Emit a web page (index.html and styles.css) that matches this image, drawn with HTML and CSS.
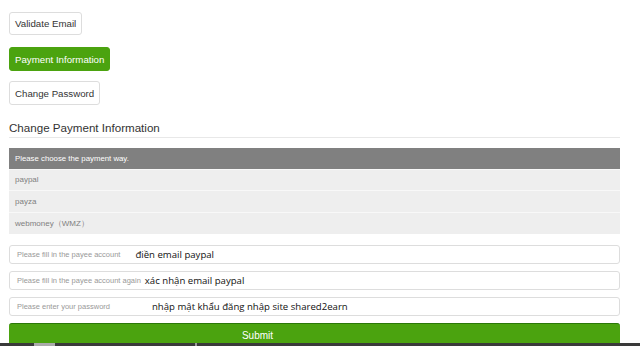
FILE: index.html
```html
<!DOCTYPE html>
<html>
	<head>
		<meta charset="utf-8">
		<title>Payment Information</title>
		<link rel="stylesheet" href="styles.css">
	</head>
	<body>
		<div class="menu">
			<a class="btn">Validate Email</a>
			<a class="btn active">Payment Information</a>
			<a class="btn">Change Password</a>
		</div>
		<h2 class="title">Change Payment Information</h2>
		<div class="ways">
			<div class="ways-head">Please choose the payment way.</div>
			<div class="way">paypal</div>
			<div class="way">payza</div>
			<div class="way">webmoney（WMZ）</div>
		</div>
		<div class="form">
			<div class="field">
				<span class="ph">Please fill in the payee account</span>
				<span class="note note1">điền email paypal</span>
			</div>
			<div class="field">
				<span class="ph">Please fill in the payee account again</span>
				<span class="note note2">xác nhận email paypal</span>
			</div>
			<div class="field">
				<span class="ph">Please enter your password</span>
				<span class="note note3">nhập mật khẩu đăng nhập site shared2earn</span>
			</div>
			<div class="submit">Submit</div>
		</div>
		<div class="taskbar"><span class="tb-item"></span><span class="tb-mark"></span></div>
	</body>
</html>
```
FILE: styles.css
```css
*{
	margin: 0px;
	padding: 0px;
	box-sizing: border-box;
}
html,body{
	height: 346px;
	overflow: hidden;
}
body{
	background: #fff;
	font-family: "Liberation Sans", Arial, sans-serif;
	color: #333;
	padding: 12px 20px 0 9px;
}
.menu{
	display: flex;
	flex-direction: column;
	align-items: flex-start;
	gap: 10px;
}
.btn{
	display: flex;
	align-items: center;
	height: 24px;
	padding: 0 5px;
	font-size: 9.7px;
	color: #333;
	border: 1px solid #ddd;
	border-radius: 3px;
	background: #fff;
}
.btn:first-child{
	height: 23px;
	margin-bottom: 2px;
}
.btn.active{
	background: #4ba30f;
	border-color: #4ba30f;
	color: #fff;
}
.title{
	margin-top: 15px;
	font-weight: normal;
	font-size: 11.6px;
	line-height: 15px;
	color: #333;
	padding-bottom: 2px;
	border-bottom: 1px solid #e8e8e8;
}
.ways{
	margin-top: 10px;
}
.ways-head{
	height: 21px;
	line-height: 21px;
	padding-left: 6px;
	background: #808080;
	color: #fff;
	font-size: 7.8px;
}
.way{
	height: 22px;
	line-height: 21px;
	padding-left: 6px;
	background: #eee;
	border-top: 1px solid #f8f8f8;
	color: #808080;
	font-size: 8px;
}
.way:nth-child(2){
	height: 21px;
	line-height: 20px;
}
.form{
	margin-top: 11px;
	display: flex;
	flex-direction: column;
	gap: 7px;
}
.field{
	display: flex;
	align-items: center;
	height: 19px;
	padding-left: 7px;
	border: 1px solid #ddd;
	border-radius: 3px;
}
.ph{
	font-size: 7.5px;
	color: #999;
}
.note{
	font-family: "Open Sans", "Noto Sans", sans-serif;
	font-size: 9.6px;
	color: #111;
}
.note1{
	margin-left: 15px;
}
.note2{
	margin-left: 4px;
}
.note3{
	margin-left: 42px;
}
.submit{
	height: 26px;
	padding-right: 114px;
	padding-bottom: 2px;
	display: flex;
	align-items: center;
	justify-content: center;
	background: #4ba30f;
	border-top: 1px solid #2b7808;
	border-radius: 3px 3px 0 0;
	color: #fff;
	font-size: 10px;
}
.taskbar{
	position: fixed;
	left: 0;
	right: 0;
	bottom: 0;
	height: 3px;
	background: #3a3a3a;
}
.tb-item{
	position: absolute;
	left: 34px;
	top: 0;
	width: 21px;
	height: 3px;
	background: #aaa;
}
.tb-mark{
	position: absolute;
	left: 195px;
	top: 0;
	width: 2px;
	height: 3px;
	background: #999;
}
```
